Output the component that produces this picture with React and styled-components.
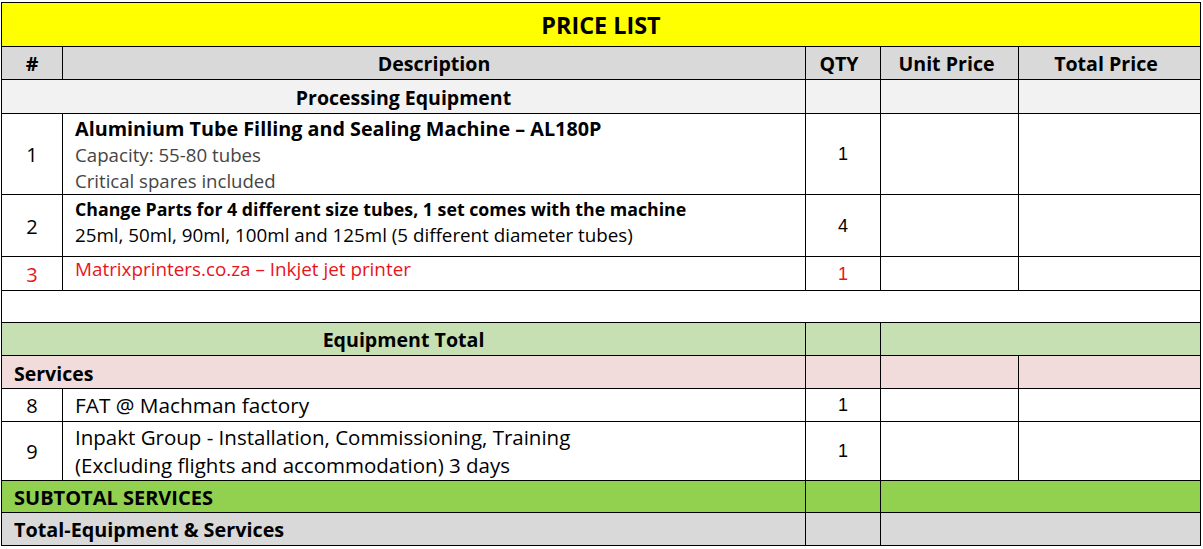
import React from "react";
import styled, { createGlobalStyle } from "styled-components";

const Global = createGlobalStyle`
  html, body { margin: 0; padding: 0; background: #fff; }
  body { font-family: "Open Sans", Lato, sans-serif; color: #000; }
`;

const Page = styled.div`
  padding: 2px 0 0 1px;
`;

const Table = styled.table`
  border-collapse: collapse;
  table-layout: fixed;
  width: 1199px;
`;

const Row = styled.tr`
  height: ${(p) => p.$h}px;
  background: ${(p) => p.$bg || "#fff"};
`;

const Cell = styled.td`
  border: 1px solid #000;
  padding: ${(p) => p.$pad || "2px 12px 0"};
  text-align: ${(p) => p.$align || "left"};
  vertical-align: ${(p) => p.$valign || "middle"};
  font-weight: ${(p) => (p.$bold ? 700 : 400)};
  font-size: ${(p) => p.$size || 19}px;
  color: ${(p) => p.$color || "#000"};
  line-height: 1.2;
  white-space: nowrap;
`;

const Title = styled.th`
  border: 1px solid #000;
  background: #ffff00;
  font-size: 23.4px;
  font-weight: 700;
  text-align: center;
  padding-top: 1px;
`;

const Head = styled.th`
  border: 1px solid #000;
  background: #d9d9d9;
  font-size: 19.6px;
  font-weight: 700;
  text-align: center;
  padding: 0 ${(p) => p.$right || 0}px 0 0;
`;

const Qty = styled(Cell)`
  font-family: "Liberation Sans", Arial, sans-serif;
  font-size: 18px;
  text-align: center;
`;

const Line = styled.div`
  font-size: ${(p) => p.$size || 19}px;
  font-weight: ${(p) => (p.$bold ? 700 : 400)};
  color: ${(p) => p.$color || "inherit"};
  line-height: ${(p) => p.$lh || 26}px;
`;

const RED = "#e8141c";
const GREY = "#454545";

export default function App() {
  return (
    <Page>
      <Global />
      <Table>
        <colgroup>
          <col style={{ width: 61 }} />
          <col style={{ width: 743 }} />
          <col style={{ width: 75 }} />
          <col style={{ width: 138 }} />
          <col style={{ width: 182 }} />
        </colgroup>
        <thead>
          <Row $h={44}>
            <Title colSpan={5}>PRICE LIST</Title>
          </Row>
          <Row $h={33}>
            <Head>#</Head>
            <Head>Description</Head>
            <Head $right={8}>QTY</Head>
            <Head $right={6}>Unit Price</Head>
            <Head $right={7}>Total Price</Head>
          </Row>
        </thead>
        <tbody>
          <Row $h={34} $bg="#f2f2f2">
            <Cell colSpan={2} $bold $size={19.5} $align="center" $pad="3px 12px 0">
              Processing Equipment
            </Cell>
            <Cell />
            <Cell />
            <Cell />
          </Row>
          <Row $h={81}>
            <Cell $align="center" $size={20}>1</Cell>
            <Cell $pad="2px 12px 0" $valign="top">
              <Line $bold $size={19.75}>Aluminium Tube Filling and Sealing Machine – AL180P</Line>
              <Line $size={18.7} $color={GREY}>Capacity: 55-80 tubes</Line>
              <Line $size={18.6} $color={GREY}>Critical spares included</Line>
            </Cell>
            <Qty>1</Qty>
            <Cell />
            <Cell />
          </Row>
          <Row $h={62}>
            <Cell $align="center" $size={20}>2</Cell>
            <Cell $pad="2px 12px 0" $valign="top">
              <Line $bold $size={17.75} $lh={24}>
                Change Parts for 4 different size tubes, 1 set comes with the machine
              </Line>
              <Line $size={18.8} $lh={28}>
                25ml, 50ml, 90ml, 100ml and 125ml (5 different diameter tubes)
              </Line>
            </Cell>
            <Qty>4</Qty>
            <Cell />
            <Cell />
          </Row>
          <Row $h={34}>
            <Cell $align="center" $size={20} $color={RED}>3</Cell>
            <Cell $valign="top" $pad="1px 12px 0" $color={RED} $size={18.85}>
              Matrixprinters.co.za – Inkjet jet printer
            </Cell>
            <Qty $color={RED}>1</Qty>
            <Cell />
            <Cell />
          </Row>
          <Row $h={32}>
            <Cell colSpan={5} />
          </Row>
          <Row $h={33} $bg="#c6e0b4">
            <Cell colSpan={2} $bold $size={19.6} $align="center">Equipment Total</Cell>
            <Cell />
            <Cell colSpan={2} />
          </Row>
          <Row $h={33} $bg="#f2dcdb">
            <Cell colSpan={2} $bold $size={19.5} $pad="3px 12px 0">Services</Cell>
            <Cell />
            <Cell />
            <Cell />
          </Row>
          <Row $h={33}>
            <Cell $align="center" $size={20}>8</Cell>
            <Cell $size={20.8} $pad="1px 12px 0">FAT @ Machman factory</Cell>
            <Qty>1</Qty>
            <Cell />
            <Cell />
          </Row>
          <Row $h={59}>
            <Cell $align="center" $size={20}>9</Cell>
            <Cell $pad="0 12px">
              <Line $size={20.5} $lh={28}>
                Inpakt Group - Installation, Commissioning, Training
              </Line>
              <Line $size={20.5} $lh={28}>
                (Excluding flights and accommodation) 3 days
              </Line>
            </Cell>
            <Qty>1</Qty>
            <Cell />
            <Cell />
          </Row>
          <Row $h={32} $bg="#92d050">
            <Cell colSpan={2} $bold $size={20}>SUBTOTAL SERVICES</Cell>
            <Cell />
            <Cell colSpan={2} />
          </Row>
          <Row $h={33} $bg="#d9d9d9">
            <Cell colSpan={2} $bold $size={19.8}>Total-Equipment &amp; Services</Cell>
            <Cell />
            <Cell colSpan={2} />
          </Row>
        </tbody>
      </Table>
    </Page>
  );
}
